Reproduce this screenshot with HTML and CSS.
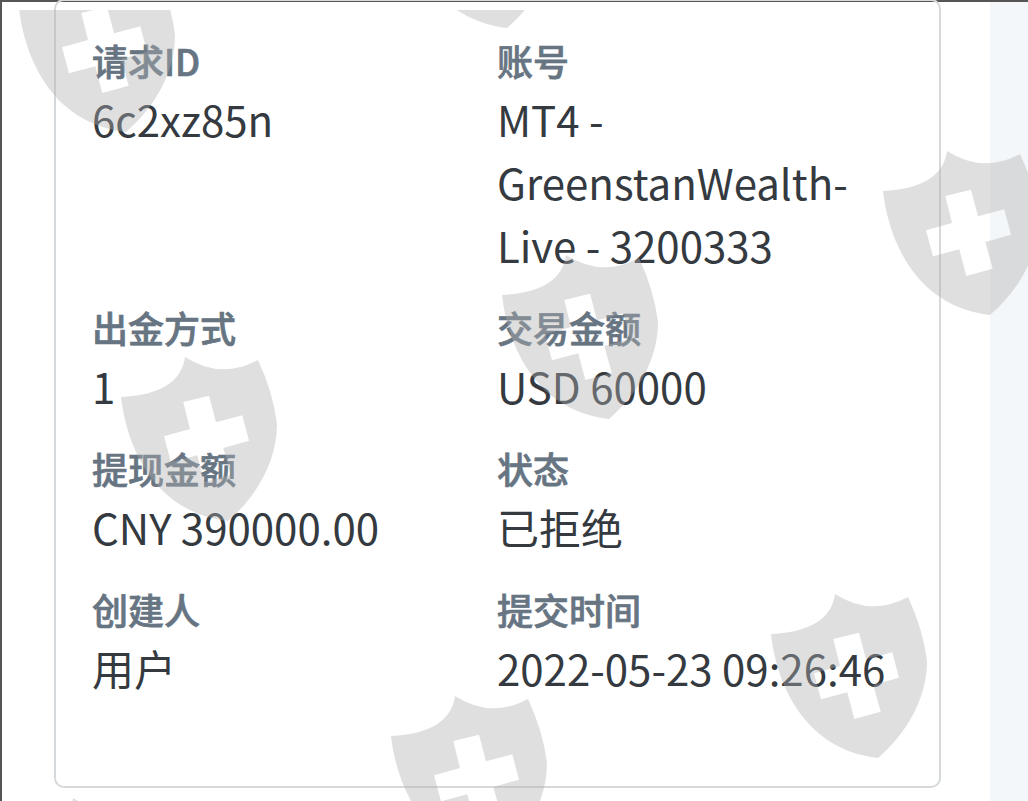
FILE: index.html
```html
<!DOCTYPE html>
<html lang="zh">
<head>
	<meta charset="utf-8">
	<meta name="viewport" content="width=device-width, initial-scale=1">
	<title>出金详情</title>
	<link rel="stylesheet" href="styles.css">
</head>
<body>
<div class="page">
	<main class="content">
		<section class="card">
			<div class="details">
				<div class="item">
					<div class="label">请求ID</div>
					<div class="value">6c2xz85n</div>
				</div>
				<div class="item">
					<div class="label">账号</div>
					<div class="value">MT4 - GreenstanWealth-Live - 3200333</div>
				</div>
				<div class="item">
					<div class="label">出金方式</div>
					<div class="value">1</div>
				</div>
				<div class="item">
					<div class="label">交易金额</div>
					<div class="value">USD 60000</div>
				</div>
				<div class="item">
					<div class="label">提现金额</div>
					<div class="value">CNY 390000.00</div>
				</div>
				<div class="item">
					<div class="label">状态</div>
					<div class="value">已拒绝</div>
				</div>
				<div class="item">
					<div class="label">创建人</div>
					<div class="value">用户</div>
				</div>
				<div class="item">
					<div class="label">提交时间</div>
					<div class="value">2022-05-23 09:26:46</div>
				</div>
			</div>
		</section>
	</main>
	<aside class="sidebar"></aside>
</div>

<!-- watermark sits on top of the page, the cross is a hole in the shield -->
<svg class="watermark" viewBox="0 10 1028 791" aria-hidden="true">
	<defs>
		<path id="shield" fill-rule="evenodd" d="M64 0Q100 23 137 3Q152 35 156 67C156 105 135 140 107 164C30 155 5 85 0 40Q59 37 64 0ZM62.3 45L88 38.7L95 65.3L121.3 58.3L128 83.7L102.3 91L109.7 117.7L83.3 125L76.3 98.3L50 105.3L43 79.3L69 72Z"/>
	</defs>
	<use href="#shield" x="19" y="-32"/>
	<use href="#shield" x="400" y="-136"/>
	<use href="#shield" x="883" y="151"/>
	<use href="#shield" x="502" y="255"/>
	<use href="#shield" x="121" y="357"/>
	<use href="#shield" x="771" y="594"/>
	<use href="#shield" x="391" y="696"/>
	<use href="#shield" x="9" y="798"/>
</svg>
</body>
</html>
```

FILE: styles.css
```css
*{
	padding: 0px;
	margin: 0px;
	box-sizing: border-box;
}
html,body{
	height: 801px;
	overflow: hidden;
	background-color: #fff;
}
body{
	font-family: "Noto Sans CJK SC", "Noto Sans", sans-serif;
	color: #343a40;
}
.page{
	display: flex;
	height: 801px;
	border-top: 2px solid #555;
	border-left: 2px solid #555;
}
.content{
	flex: 1;
	padding-left: 52px;
	padding-right: 49px;
}
.sidebar{
	width: 38px;
	background-color: #f4f7fa;
}
.card{
	height: 789px;
	margin-top: -3px;
	padding: 33px 36px 0 36px;
	border: 2px solid #d6d9db;
	border-radius: 10px;
}
.details{
	display: grid;
	grid-template-columns: 405px 1fr;
	row-gap: 25px;
}
.label{
	font-size: 36px;
	line-height: 53px;
	font-weight: 500;
	-webkit-text-stroke: 0.7px #677583;
	color: #677583;
}
.value{
	font-size: 42px;
	line-height: 63px;
}
.watermark{
	position: absolute;
	top: 10px;
	left: 0;
	width: 1028px;
	height: 791px;
	fill: rgba(175, 175, 175, 0.4);
	pointer-events: none;
}
```
